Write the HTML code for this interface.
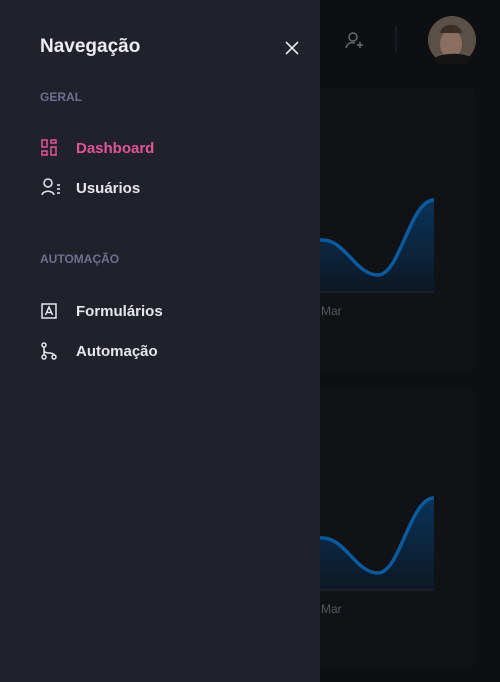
<!DOCTYPE html>
<html><head><meta charset="utf-8"><style>
body{margin:0;width:500px;height:682px;background:#0e0f13;overflow:hidden;position:relative;font-family:"Liberation Sans",sans-serif}
.card{position:absolute;left:300px;width:175px;background:#111216;border-radius:6px}
.side{position:absolute;left:0;top:0;width:320px;height:682px;background:#21212b}
.t{position:absolute;color:#ececf1;font-weight:bold}
.sec{position:absolute;left:40px;font-size:12px;font-weight:bold;color:#6e7090}
.item{position:absolute;left:76px;font-size:15px;font-weight:bold;color:#e6e6ec}
svg.i{position:absolute;left:40px}
.mar{position:absolute;left:321px;font-size:12px;color:#55575e}
</style></head><body>
<div class="card" style="top:88px;height:282px"></div>
<div class="card" style="top:388px;height:280px"></div>
<svg style="position:absolute;left:0;top:0" width="500" height="682">
<defs><linearGradient id="g" x1="0" y1="0" x2="0" y2="1"><stop offset="0" stop-color="#0a3358"/><stop offset="1" stop-color="#0d1825"/></linearGradient></defs>
<path d="M320 240 C345 238 355 275 378 275 C400 275 410 200 434 200 L434 292 L320 292Z" fill="url(#g)"/>
<path d="M320 240 C345 238 355 275 378 275 C400 275 410 200 434 200" stroke="#0b5a9e" stroke-width="3.5" fill="none"/>
<line x1="320" y1="292" x2="434" y2="292" stroke="#262a33"/>
<path d="M320 538 C345 536 355 573 378 573 C400 573 410 498 434 498 L434 590 L320 590Z" fill="url(#g)"/>
<path d="M320 538 C345 536 355 573 378 573 C400 573 410 498 434 498" stroke="#0b5a9e" stroke-width="3.5" fill="none"/>
<line x1="320" y1="590" x2="434" y2="590" stroke="#262a33"/>
<g stroke="#6a6c74" stroke-width="1.4" fill="none"><circle cx="353" cy="37" r="4"/><path d="M346 48 C347 43 351 42 355 43"/><path d="M357 45h6M360 42v6"/></g>
<line x1="396" y1="26" x2="396" y2="53" stroke="#24262c"/>
<circle cx="452" cy="40" r="24" fill="#5a5048"/>
<ellipse cx="451" cy="44" rx="11" ry="14" fill="#8a6f60"/>
<path d="M440 33 C442 22 460 22 462 33" fill="#3b2e25"/>
<path d="M432 60 C440 52 464 52 472 58 L466 64 L438 64Z" fill="#141414"/>
</svg>
<div class="mar" style="top:304px">Mar</div>
<div class="mar" style="top:602px">Mar</div>
<div class="side">
<div class="t" style="left:40px;top:36px;font-size:19px">Navegação</div>
<svg style="position:absolute;left:285px;top:41px" width="14" height="14"><path d="M1 1L13 13M13 1L1 13" stroke="#e6e6ec" stroke-width="1.6"/></svg>
<div class="sec" style="top:90px">GERAL</div>
<svg class="i" style="top:139px" width="18" height="18" fill="none" stroke="#e0559a" stroke-width="1.5"><rect x="2" y="1" width="5" height="7"/><rect x="11" y="1" width="5" height="3"/><rect x="2" y="12" width="5" height="4"/><rect x="11" y="8" width="5" height="8"/></svg>
<div class="item" style="top:140px;color:#e0559a">Dashboard</div>
<svg class="i" style="top:178px" width="22" height="20" fill="none" stroke="#e6e6ec" stroke-width="1.5"><circle cx="8" cy="5" r="4"/><path d="M2 17C3 12 13 12 14 17"/><path d="M17 7h3M17 11h3M17 15h3"/></svg>
<div class="item" style="top:180px">Usuários</div>
<div class="sec" style="top:252px">AUTOMAÇÃO</div>
<svg class="i" style="top:302px" width="18" height="18" fill="none" stroke="#e6e6ec" stroke-width="1.5"><rect x="2" y="2" width="14" height="14"/><path d="M5.5 13L9 5L12.5 13M6.8 10.5h4.4"/></svg>
<div class="item" style="top:303px">Formulários</div>
<svg class="i" style="top:342px" width="18" height="18" fill="none" stroke="#e6e6ec" stroke-width="1.5"><circle cx="4" cy="3" r="2"/><circle cx="4" cy="15" r="2"/><circle cx="14" cy="15" r="2"/><path d="M4 5v8M4 8c0 2 2 3 5 3c3 0 5 1 5 2"/></svg>
<div class="item" style="top:343px">Automação</div>
</div>
</body></html>
